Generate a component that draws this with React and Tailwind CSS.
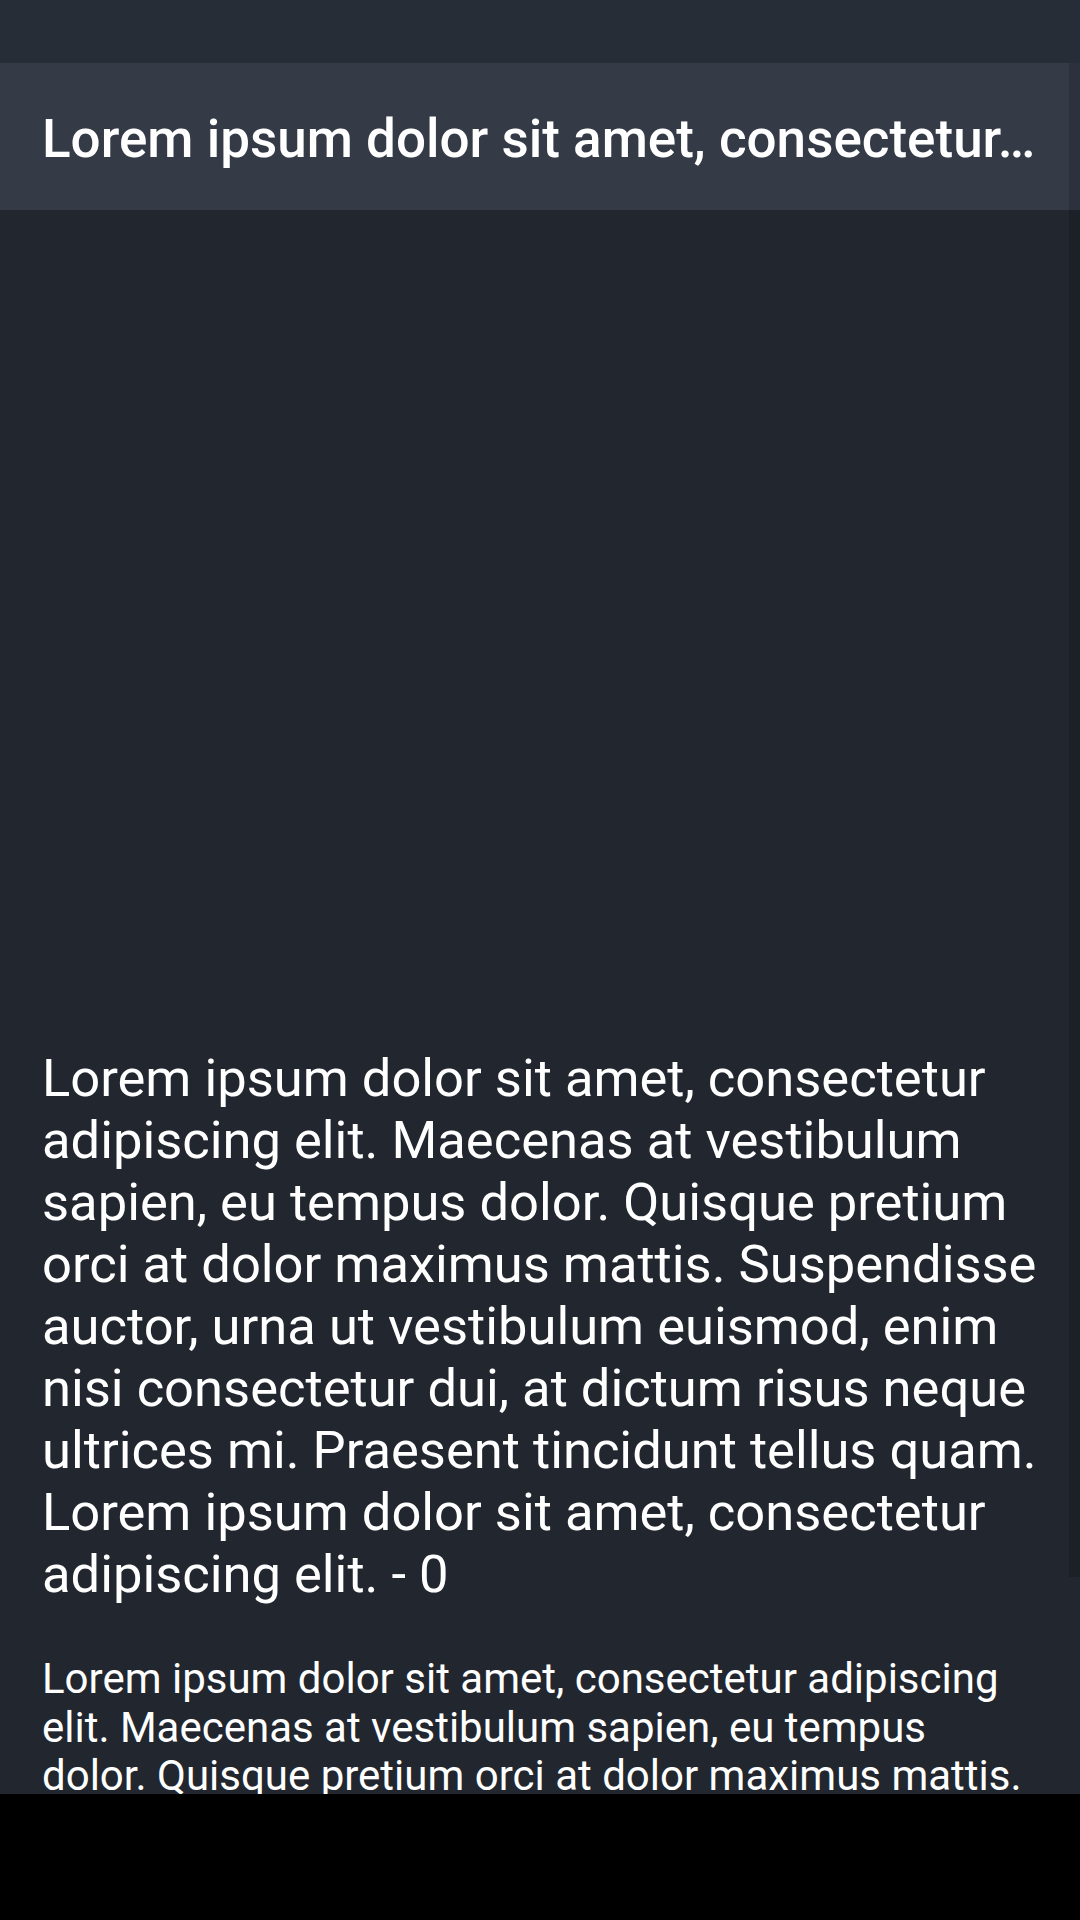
const LOREM =
  "Lorem ipsum dolor sit amet, consectetur adipiscing elit. Maecenas at vestibulum sapien, eu tempus dolor. Quisque pretium orci at dolor maximus mattis. Suspendisse auctor, urna ut vestibulum euismod, enim nisi consectetur dui, at dictum risus neque ultrices mi. Praesent tincidunt tellus quam.";

export default function App() {
  return (
    <div
      className="relative w-[1080px] h-[1920px] bg-black overflow-hidden"
      style={{ fontFamily: "Roboto, 'Noto Sans', sans-serif" }}
    >
      <div className="h-[63px] bg-[#272d37]" />

      <div className="relative h-[1731px] bg-[#22272f] overflow-hidden">
        <header className="h-[147px] bg-[#343a46] flex items-center px-[42px] pt-[5px]">
          <h1 className="whitespace-nowrap text-[53px] font-medium text-white leading-none">
            Lorem ipsum dolor sit amet, consectetur…
          </h1>
        </header>

        <div className="h-[837px]" />

        <p className="px-[42px] text-[52.5px] leading-[62px] text-white">
          {LOREM} Lorem ipsum dolor sit amet, consectetur adipiscing elit. - 0
        </p>

        <p className="mt-[50px] px-[42px] text-[42px] leading-[48.5px] text-white">
          {LOREM}
        </p>

        <div className="absolute right-0 top-0 w-[11px] h-[1514px] bg-black/15" />
      </div>
    </div>
  );
}
